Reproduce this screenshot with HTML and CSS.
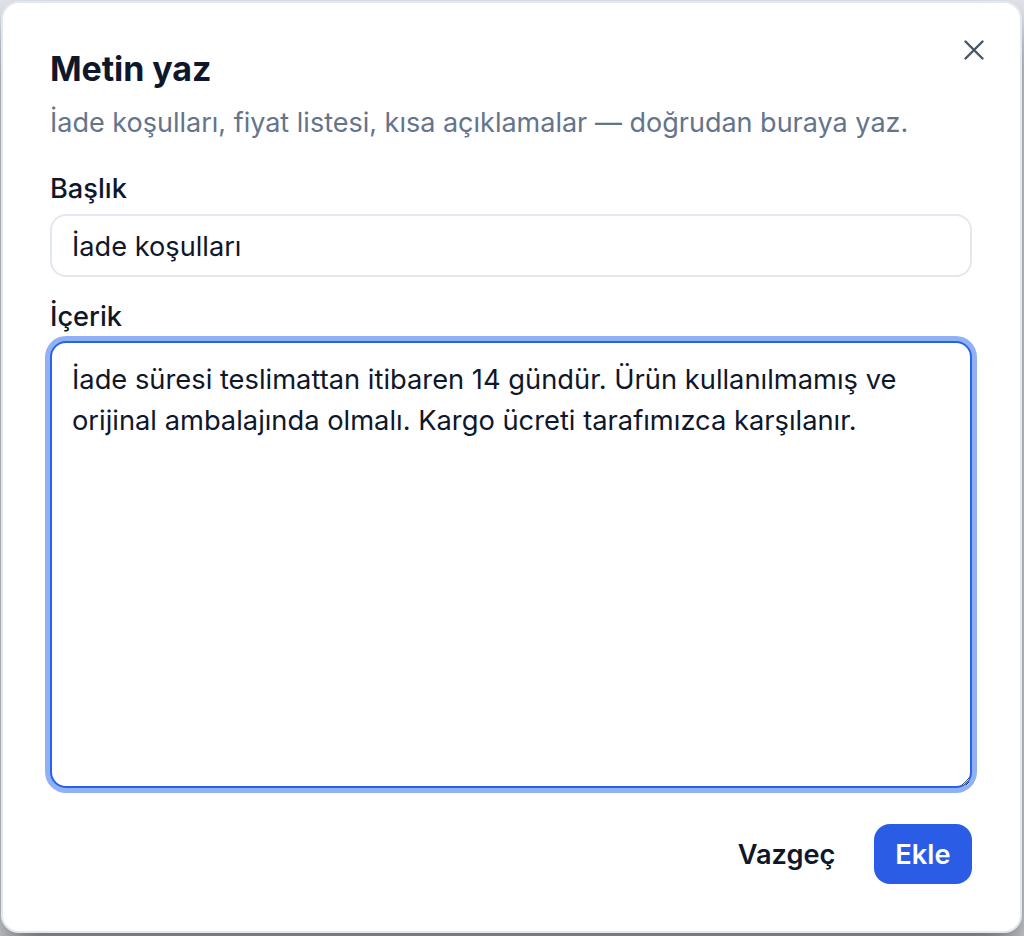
FILE: index.html
```html
<!DOCTYPE html>
<html lang="tr">
<head>
<meta charset="utf-8">
<title>Metin yaz</title>
<link rel="stylesheet" href="styles.css">
</head>
<body>
<div class="dialog" role="dialog" aria-labelledby="dlg-title">
  <div class="header">
    <div class="heading">
      <h1 id="dlg-title" class="title">Metin yaz</h1>
      <p class="subtitle">İade koşulları, fiyat listesi, kısa açıklamalar — doğrudan buraya yaz.</p>
    </div>
    <button class="close" aria-label="Kapat">
      <svg width="20" height="20" viewBox="0 0 20 20" fill="none" stroke="currentColor" stroke-width="2.4" stroke-linecap="round"><path d="M1.5 1.5l17 17M18.5 1.5l-17 17"/></svg>
    </button>
  </div>
  <div class="field first">
    <label class="label" for="baslik">Başlık</label>
    <input id="baslik" class="input" type="text" value="İade koşulları">
  </div>
  <div class="field">
    <label class="label" for="icerik">İçerik</label>
    <textarea id="icerik" class="textarea">İade süresi teslimattan itibaren 14 gündür. Ürün kullanılmamış ve orijinal ambalajında olmalı. Kargo ücreti tarafımızca karşılanır.</textarea>
  </div>
  <div class="footer">
    <button class="btn ghost">Vazgeç</button>
    <button class="btn primary">Ekle</button>
  </div>
</div>
</body>
</html>
```

FILE: styles.css
```css
html, body {
  margin: 0;
  padding: 0;
  height: 936px;
  overflow: hidden;
}
body {
  background: #e5e8ee;
  font-family: Inter, "Noto Sans", sans-serif;
  color: #0f172a;
}
.dialog {
  box-sizing: border-box;
  margin: 1px 0 0 1px;
  width: 1021px;
  height: 932px;
  background: #ffffff;
  border: 2px solid #e2e8f0;
  border-radius: 18px;
  box-shadow: 0 24px 40px rgba(0, 0, 0, 0.55);
  padding: 46px 48px 47px 47px;
  display: flex;
  flex-direction: column;
}
.header {
  display: flex;
  justify-content: space-between;
  align-items: flex-start;
}
.title {
  margin: 0;
  font-size: 34px;
  line-height: 40px;
  font-weight: 700;
  letter-spacing: -0.1px;
  color: #0f172a;
}
.subtitle {
  margin: 14px 0 0 0;
  font-size: 27px;
  line-height: 40.8px;
  color: #64748b;
}
.close {
  margin: -9px -12px 0 0;
  padding: 0;
  width: 20px;
  height: 20px;
  border: 0;
  background: none;
  color: #475569;
  display: flex;
}
.field {
  display: flex;
  flex-direction: column;
  margin-top: 20px;
}
.field.first {
  margin-top: 25px;
}
.field.first .label {
  margin-bottom: 4px;
}
.label {
  font-size: 27.2px;
  line-height: 40.8px;
  font-weight: 500;
  margin-bottom: 4px;
}
.input {
  box-sizing: border-box;
  height: 63px;
  border: 2px solid #e2e8f0;
  border-radius: 16px;
  padding: 2px 20px 0 20px;
  font-family: inherit;
  font-size: 27.2px;
  color: #0f172a;
  outline: none;
}
.textarea {
  box-sizing: border-box;
  height: 447px;
  border: 2px solid #2563eb;
  border-radius: 16px;
  box-shadow: 0 0 0 5px rgba(37, 99, 235, 0.5);
  padding: 17px 20px;
  font-family: inherit;
  font-size: 27.3px;
  line-height: 40.8px;
  color: #0f172a;
  outline: none;
  resize: vertical;
}
.footer {
  margin-top: auto;
  display: flex;
  justify-content: flex-end;
  gap: 17px;
}
.btn {
  height: 60px;
  padding: 0 21.5px;
  border: 0;
  border-radius: 16px;
  font-family: inherit;
  font-size: 27.2px;
  font-weight: 600;
  cursor: pointer;
}
.ghost {
  background: transparent;
  color: #0f172a;
}
.primary {
  background: #2b5ce6;
  color: #ffffff;
}
```
